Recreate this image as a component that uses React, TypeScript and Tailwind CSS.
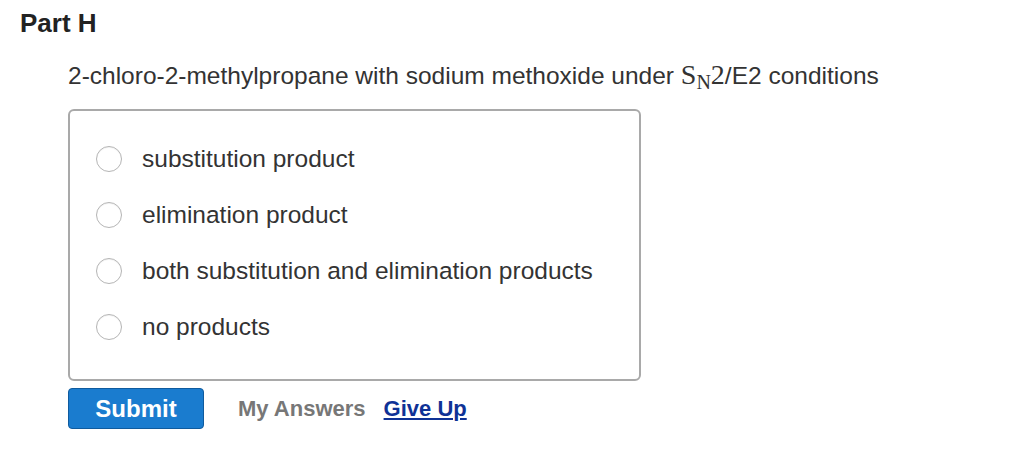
import React from 'react';

const options = [
  'substitution product',
  'elimination product',
  'both substitution and elimination products',
  'no products',
];

export default function App() {
  return (
    <div className="w-[1024px] h-[463px] bg-white text-[#333] font-['Liberation_Sans',Arial,sans-serif]">
      <div className="pl-5 pt-[8px]">
        <h2 className="text-[26px] font-bold leading-[30px] text-[#222]">Part H</h2>
      </div>
      <div className="pl-[68px] pt-[23px]">
        <p className="text-[24.5px] leading-[28px] h-[28px]">
          2-chloro-2-methylpropane with sodium methoxide under{' '}
          <span className="font-['Liberation_Serif',serif] text-[28px] leading-none">
            S<span className="relative top-[5px] text-[20px]">N</span>2
          </span>
          /E2 conditions
        </p>

        <div className="mt-[20px] w-[573px] h-[272px] border-2 border-[#a9a9a9] rounded-[6px] pl-[26px] pt-[34px]">
          <ul className="flex flex-col gap-[28px]">
            {options.map((o) => (
              <li key={o} className="flex items-center h-[28px]">
                <span className="w-[26px] h-[26px] rounded-full border border-[#b5b5b5] bg-white shadow-[inset_0_1px_1px_rgba(0,0,0,0.05)]" />
                <span className="ml-[20px] text-[24.5px] leading-[28px]">{o}</span>
              </li>
            ))}
          </ul>
        </div>

        <div className="mt-[7px] flex items-center">
          <button className="w-[136px] h-[41px] rounded-[4px] bg-[#1a7ccf] border border-[#0f5b9e] text-white text-[24px] font-bold leading-none">
            Submit
          </button>
          <span className="ml-[34px] text-[22px] font-bold text-[#777]">My Answers</span>
          <a href="#" className="ml-[18px] text-[22px] font-bold text-[#0f3296] underline underline-offset-2 decoration-2">
            Give Up
          </a>
        </div>
      </div>
    </div>
  );
}
